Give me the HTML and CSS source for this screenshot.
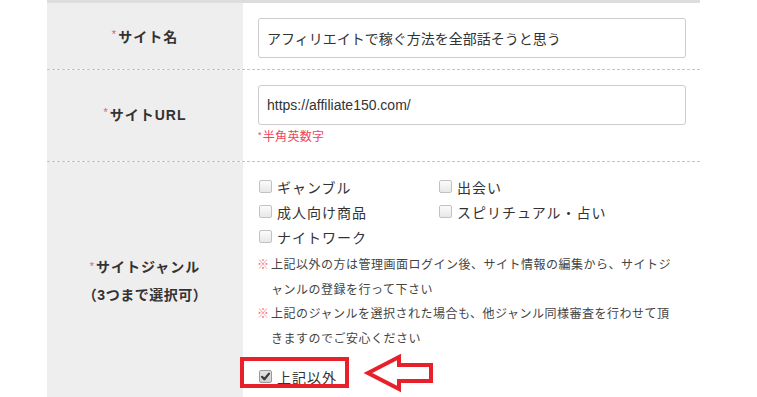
FILE: index.html
```html
<!DOCTYPE html>
<html lang="ja">
<head>
<meta charset="utf-8">
<title>サイト登録</title>
<link rel="stylesheet" href="styles.css">
</head>
<body>
<div class="form">
  <div class="row row-name">
    <div class="th"><span class="req">*</span>サイト名</div>
    <div class="td">
      <div class="input">アフィリエイトで稼ぐ方法を全部話そうと思う</div>
    </div>
  </div>
  <div class="row row-url">
    <div class="th"><span class="req">*</span>サイトURL</div>
    <div class="td">
      <div class="input">https://affiliate150.com/</div>
      <div class="hint"><span class="hint-star">*</span>半角英数字</div>
    </div>
  </div>
  <div class="row row-genre">
    <div class="th th-genre">
      <div><span class="req">*</span>サイトジャンル</div>
      <div class="th-sub">（3つまで選択可）</div>
    </div>
    <div class="td">
      <div class="choices">
        <label class="choice"><span class="box"></span>ギャンブル</label>
        <label class="choice"><span class="box"></span>出会い</label>
        <label class="choice"><span class="box"></span>成人向け商品</label>
        <label class="choice"><span class="box"></span>スピリチュアル・占い</label>
        <label class="choice"><span class="box"></span>ナイトワーク</label>
      </div>
      <div class="notes">
        <p class="note"><span class="mark">※</span><span class="note-text">上記以外の方は管理画面ログイン後、サイト情報の編集から、サイトジ<br>ャンルの登録を行って下さい</span></p>
        <p class="note"><span class="mark">※</span><span class="note-text">上記のジャンルを選択された場合も、他ジャンル同様審査を行わせて頂<br>きますのでご安心ください</span></p>
      </div>
      <div class="other">
        <label class="choice"><span class="box checked"><svg viewBox="0 0 13 13" width="13" height="13"><path d="M3 6.8 L5.4 9.3 L10 3.6" fill="none" stroke="#3a3a3a" stroke-width="2.2" stroke-linecap="round" stroke-linejoin="round"/></svg></span>上記以外</label>
        <span class="highlight"></span>
        <svg class="arrow" viewBox="0 0 72 40" width="72" height="40">
          <polygon points="4,19 35,3 35,11 67,11 67,27 35,27 35,35" fill="#fff" stroke="#e8202a" stroke-width="4" stroke-linejoin="miter"/>
        </svg>
      </div>
    </div>
  </div>
</div>
</body>
</html>
```
FILE: styles.css
```css
* { box-sizing: border-box; }
body {
  margin: 0;
  background: #fff;
  font-family: "Liberation Sans", "Noto Sans CJK JP", sans-serif;
  color: #333;
}
.form {
  margin-left: 47px;
  width: 653px;
  border-top: 3px solid #dddddd;
}
.row {
  display: grid;
  grid-template-columns: 196px 1fr;
  border-bottom: 1px dashed #c4c4c4;
}
.th {
  background: #eeeeee;
  display: flex;
  align-items: center;
  justify-content: center;
  font-weight: bold;
  font-size: 14px;
  letter-spacing: 1px;
  color: #333;
}
.row-url .th { padding-bottom: 3px; }
.req {
  color: #ee5a6a;
  font-size: 11px;
  font-weight: normal;
  margin-right: 1px;
  position: relative;
  top: -2px;
}
.th-genre {
  flex-direction: column;
  line-height: 27px;
}
.th-sub { letter-spacing: 0.5px; }
.td {
  padding: 15px 14px 11px 15px;
}
.row-url .td { padding-bottom: 14px; }
.row-genre .td { padding-top: 12px; padding-bottom: 12px; }
.input {
  height: 40px;
  border: 1px solid #cccccc;
  border-radius: 3px;
  padding: 0 8px;
  display: flex;
  align-items: center;
  font-size: 14px;
  color: #333;
}
.hint {
  margin-top: 3px;
  font-size: 12px;
  line-height: 18px;
  color: #f0435a;
  letter-spacing: 0.3px;
}
.hint-star {
  font-size: 9px;
  position: relative;
  top: -3px;
  margin-right: 1px;
}
.choices {
  display: grid;
  grid-template-columns: 180px 180px;
}
.choice {
  display: flex;
  align-items: center;
  height: 25px;
  font-size: 14px;
  letter-spacing: 1px;
  color: #333;
}
.box {
  width: 13px;
  height: 13px;
  margin-left: 1px;
  margin-right: 5px;
  border: 1px solid #c2c2c2;
  border-radius: 2px;
  background: linear-gradient(#fbfbfb, #e8e8e8);
  display: inline-block;
  flex: none;
}
.box.checked {
  background: linear-gradient(#e4e4e4, #cfcfcf);
  border-color: #9a9a9a;
  position: relative;
}
.box.checked svg {
  position: absolute;
  left: -1px;
  top: -1px;
}
.notes {
  margin-top: 4px;
}
.note {
  margin: 0;
  display: flex;
  font-size: 12px;
  line-height: 24.5px;
  letter-spacing: 0.5px;
  color: #444;
}
.mark {
  color: #f5707a;
  flex: none;
  width: 13px;
  margin-left: -1px;
  margin-right: 1px;
}
.other {
  position: relative;
  margin-top: 13px;
}
.highlight {
  position: absolute;
  left: -18px;
  top: -7px;
  width: 109px;
  height: 31px;
  border: 4px solid #e8202a;
}
.arrow {
  position: absolute;
  left: 106px;
  top: -10px;
}
```
